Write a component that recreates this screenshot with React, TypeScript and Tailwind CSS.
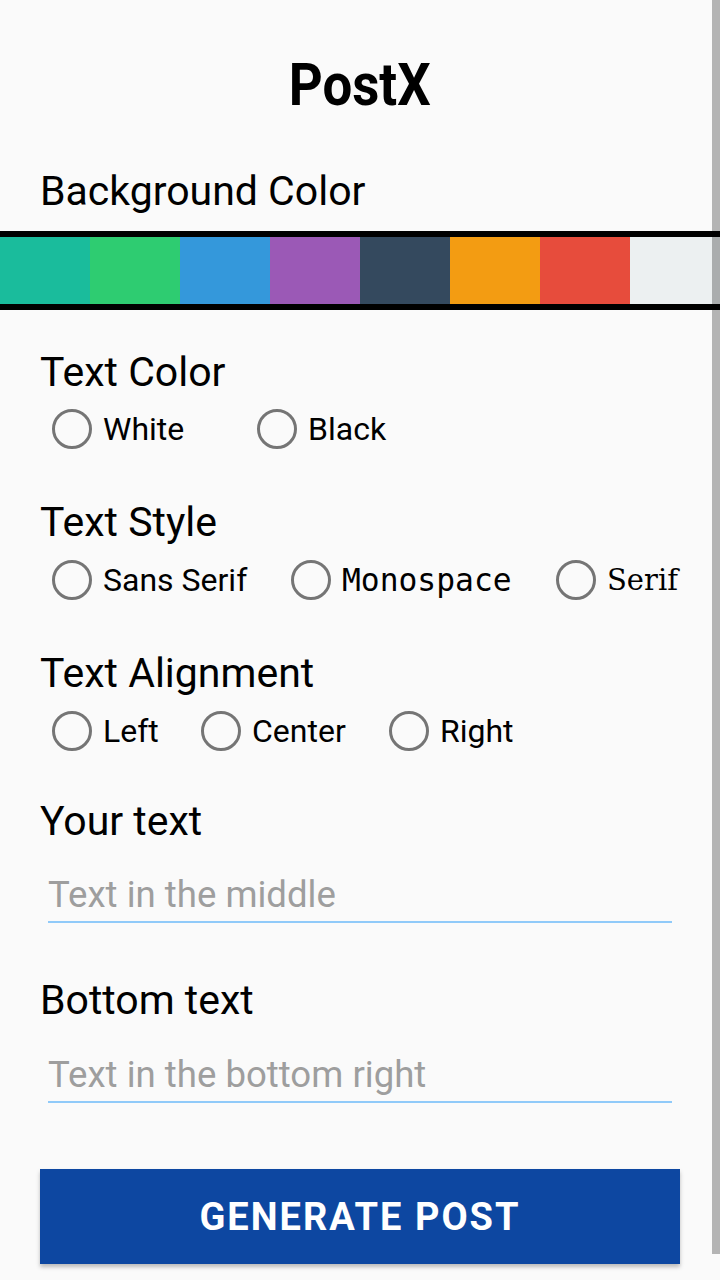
import React from "react";

const swatches = ["#1abc9c", "#2ecc71", "#3498db", "#9b59b6", "#34495e", "#f39c12", "#e74c3c", "#ecf0f1"];

function Radio({ label, width, fontClass }: { label: string; width?: string; fontClass?: string }) {
  return (
    <div className={`flex items-center h-[48px] ${width ?? ""}`}>
      <div className="w-[40px] h-[40px] rounded-full border-[3px] border-[#757575] shrink-0" />
      <span className={`ml-[11px] leading-[48px] text-black whitespace-nowrap ${fontClass ?? "font-['Roboto',sans-serif] text-[32px]"}`}>
        {label}
      </span>
    </div>
  );
}

function Heading({ children, className }: { children: React.ReactNode; className?: string }) {
  return (
    <div className={`px-[40px] h-[48px] text-[41px] leading-[48px] text-black font-['Roboto',sans-serif] ${className ?? ""}`}>
      {children}
    </div>
  );
}

export default function App() {
  return (
    <div className="relative w-[720px] h-[1280px] bg-[#fafafa] overflow-hidden font-['Roboto',sans-serif]">
      <div className="pt-[50px] h-[120px] flex justify-center">
        <div className="text-[60px] leading-[70px] font-bold text-black scale-x-[0.88]">PostX</div>
      </div>

      <Heading className="mt-[47px]">Background Color</Heading>

      <div className="mt-[16px] border-y-[6px] border-black flex h-[79px]">
        {swatches.map((c) => (
          <div key={c} className="w-[90px] h-full" style={{ backgroundColor: c }} />
        ))}
      </div>

      <Heading className="mt-[38px]">Text Color</Heading>
      <div className="mt-[9px] pl-[52px] flex">
        <Radio label="White" width="w-[205px]" />
        <Radio label="Black" />
      </div>

      <Heading className="mt-[45px]">Text Style</Heading>
      <div className="mt-[10px] pl-[52px] flex">
        <Radio label="Sans Serif" width="w-[239px]" />
        <Radio label="Monospace" width="w-[265px]" fontClass="font-['DejaVu_Sans_Mono',monospace] text-[31.3px]" />
        <Radio label="Serif" fontClass="font-['DejaVu_Serif',serif] text-[29px]" />
      </div>

      <Heading className="mt-[45px]">Text Alignment</Heading>
      <div className="mt-[10px] pl-[52px] flex">
        <Radio label="Left" width="w-[149px]" />
        <Radio label="Center" width="w-[188px]" />
        <Radio label="Right" />
      </div>

      <Heading className="mt-[42px]">Your text</Heading>
      <div className="mt-[28px] mx-[48px] pb-[4px] border-b-2 border-[#90caf9]">
        <div className="text-[36.6px] leading-[44px] text-[#9e9e9e]">Text in the middle</div>
      </div>

      <Heading className="mt-[53px]">Bottom text</Heading>
      <div className="mt-[29px] mx-[48px] pb-[4px] border-b-2 border-[#90caf9]">
        <div className="text-[36.6px] leading-[44px] text-[#9e9e9e]">Text in the bottom right</div>
      </div>

      <div className="mt-[66px] mx-[40px] h-[95px] bg-[#0d47a1] shadow-[0_3px_4px_rgba(0,0,0,0.25)] flex items-center justify-center">
        <span className="text-white font-bold text-[38px] leading-none tracking-[2px]">GENERATE POST</span>
      </div>

      <div className="absolute right-0 top-0 w-[8px] h-[1254px] bg-[rgba(0,0,0,0.28)]" />
    </div>
  );
}
